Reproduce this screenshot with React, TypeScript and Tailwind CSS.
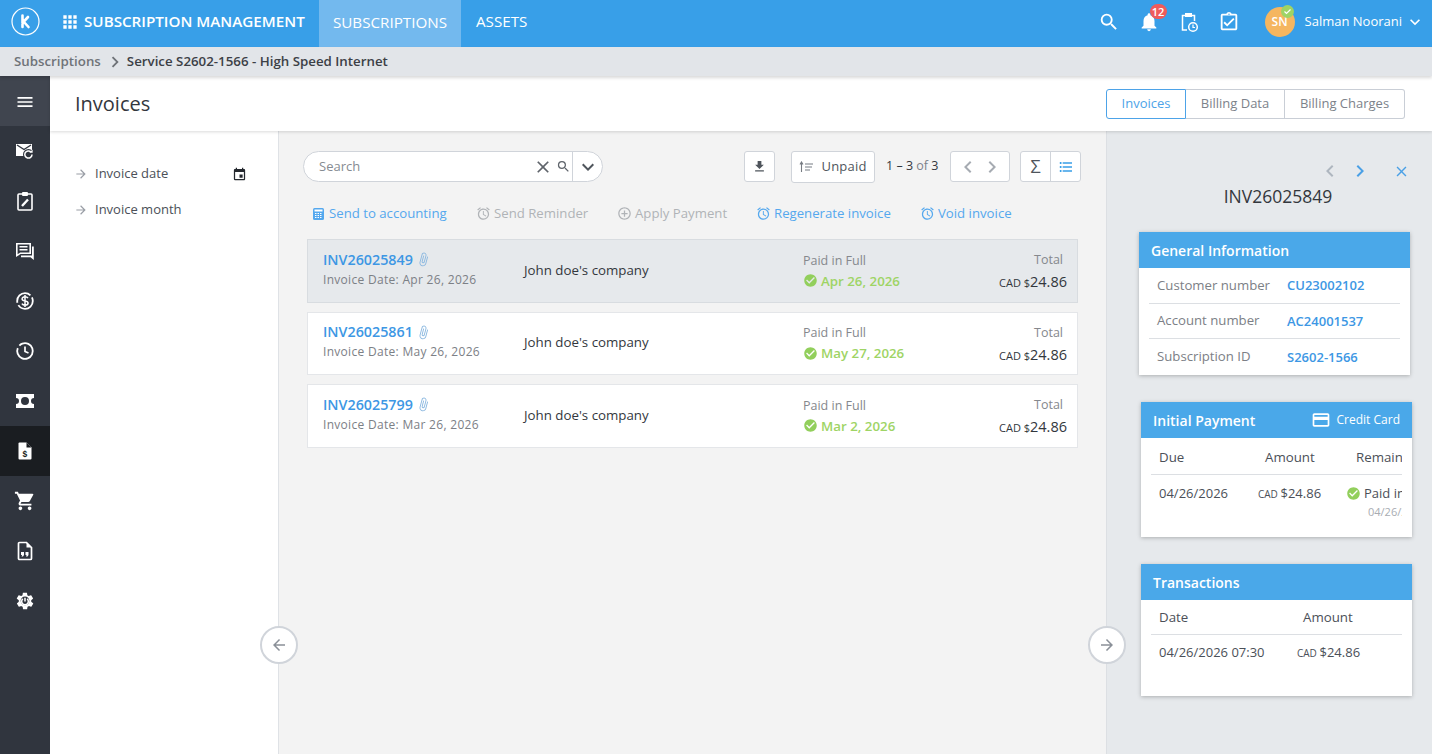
import {
  MdApps,
  MdArrowBack,
  MdArrowForward,
  MdCheckCircle,
  MdChevronLeft,
  MdChevronRight,
  MdClose,
  MdCreditCard,
  MdEvent,
  MdFileDownload,
  MdKeyboardArrowDown,
  MdMenu,
  MdNotifications,
  MdOutlineAccessAlarm,
  MdOutlineAddCircleOutline,
  MdOutlineAssignmentTurnedIn,
  MdOutlineAttachFile,
  MdOutlineFormatListBulleted,
  MdSearch,
  MdShoppingCart,
} from "react-icons/md";

const invoices = [
  { id: "INV26025849", date: "Apr 26, 2026", paid: "Apr 26, 2026", selected: true },
  { id: "INV26025861", date: "May 26, 2026", paid: "May 27, 2026", selected: false },
  { id: "INV26025799", date: "Mar 26, 2026", paid: "Mar 2, 2026", selected: false },
];

function Logo() {
  return (
    <svg width="29" height="29" viewBox="0 0 29 29" fill="none" stroke="white">
      <circle cx="14.5" cy="14.5" r="13.5" strokeWidth="1.2" />
      <path d="M11.5 8.5V20M11.5 16L17 10M12.5 14.5L17.5 20" strokeWidth="2.6" strokeLinecap="round" />
    </svg>
  );
}

function SideIcon({ children, active }: { children: React.ReactNode; active?: boolean }) {
  return (
    <div className={active ? "h-[50px] flex items-center justify-center bg-[#1a1d21]" : "h-[50px] flex items-center justify-center"}>
      {children}
    </div>
  );
}

function Sidebar() {
  return (
    <aside className="w-[50px] shrink-0 bg-[#30353e] text-white">
      <div className="h-[50px] pt-[2px] flex items-center justify-center bg-[#40454f]">
        <MdMenu size={20} />
      </div>
      <SideIcon>
        <svg width="20" height="20" viewBox="0 0 20 20" fill="none">
          <path d="M1 3h16v9.5H9V15H1z" fill="white" />
          <path d="M2 4l7 4.5L16 4" stroke="#30353e" strokeWidth="1.4" />
          <circle cx="13.5" cy="13.5" r="5.5" fill="#30353e" />
          <path d="M17 13.5a3.6 3.6 0 1 1-1.1-2.6" stroke="white" strokeWidth="1.5" />
          <path d="M17.6 8.6v3.2h-3.2z" fill="white" />
        </svg>
      </SideIcon>
      <SideIcon>
        <svg width="20" height="20" viewBox="0 0 20 20" fill="none">
          <rect x="3" y="3" width="14" height="16" rx="1" stroke="white" strokeWidth="1.6" />
          <rect x="7" y="1" width="6" height="4" rx="1" fill="white" />
          <path d="M7 15l6-6.5" stroke="white" strokeWidth="2.4" />
        </svg>
      </SideIcon>
      <SideIcon>
        <svg width="20" height="20" viewBox="0 0 20 20" fill="none">
          <path d="M1.8 2.800h13.400v9.400H5.500l-3.700 2.400z" stroke="white" strokeWidth="1.600" />
          <path d="M4.500 5.800h8M4.500 8.800h8" stroke="white" strokeWidth="1.600" />
          <path d="M17 5.500h1.800V19l-3.300-2.800H6v-1.800h11z" fill="white" />
        </svg>
      </SideIcon>
      <SideIcon>
        <svg width="20" height="20" viewBox="0 0 20 20" fill="none" stroke="white">
          <circle cx="10" cy="10" r="7.8" strokeWidth="1.8" strokeDasharray="20 2.5" />
          <path d="M13 7.200c-.6-1-1.700-1.400-3-1.400-1.700 0-2.900.9-2.900 2.100 0 2.900 6 1.300 6 4.200 0 1.200-1.300 2.100-3.100 2.100-1.400 0-2.500-.5-3.100-1.500M10 4v12" strokeWidth="1.5" />
        </svg>
      </SideIcon>
      <SideIcon>
        <svg width="20" height="20" viewBox="0 0 20 20" fill="none" stroke="white">
          <circle cx="10" cy="10" r="7.8" strokeWidth="1.8" strokeDasharray="30 3" transform="rotate(-20 10 10)" />
          <path d="M10 5.500V10.500L13.500 12" strokeWidth="1.7" />
        </svg>
      </SideIcon>
      <SideIcon>
        <svg width="20" height="14" viewBox="0 0 20 14">
          <path d="M1 0h18v4a3 3 0 0 0 0 6v4H1v-4a3 3 0 0 0 0-6z" fill="white" />
          <circle cx="10" cy="7" r="4" fill="#30353e" />
        </svg>
      </SideIcon>
      <SideIcon active>
        <svg width="18" height="20" viewBox="0 0 18 20">
          <path d="M3.500 1.500h7l5 5v11a1 1 0 0 1-1 1h-11a1 1 0 0 1-1-1v-15a1 1 0 0 1 1-1z" fill="white" />
          <path d="M10.500 1.500l5 5h-5z" fill="#1a1d21" />
          <text x="8.800" y="16" fontSize="8.500" fontWeight="700" textAnchor="middle" fill="#1a1d21" fontFamily="Liberation Sans, sans-serif">$</text>
        </svg>
      </SideIcon>
      <SideIcon>
        <MdShoppingCart size={22} />
      </SideIcon>
      <SideIcon>
        <svg width="18" height="20" viewBox="0 0 18 20" fill="none">
          <path d="M3.500 1.500h7l5 5v11a1 1 0 0 1-1 1h-11a1 1 0 0 1-1-1v-15a1 1 0 0 1 1-1z" fill="#30353e" stroke="white" strokeWidth="1.700" />
          <path d="M10.500 1.500l5 5h-5z" fill="white" />
          <path d="M5 11h3v3l-1 1.500H5.500l.6-1.500H5zM9.500 11h3v3l-1 1.500H10l.6-1.500h-1.100z" fill="white" />
        </svg>
      </SideIcon>
      <SideIcon>
        <svg width="20" height="20" viewBox="0 0 24 24" fill="white">
          <path fillRule="evenodd" d="M19.400 13c.1-.3.100-.7.100-1s0-.7-.1-1l2.100-1.600c.2-.2.200-.4.100-.6l-2-3.500c-.1-.2-.4-.3-.6-.2l-2.500 1c-.5-.4-1.100-.7-1.700-1l-.4-2.600c0-.2-.2-.4-.5-.4h-4c-.3 0-.5.200-.5.400l-.4 2.600c-.6.300-1.200.6-1.700 1l-2.500-1c-.2-.1-.5 0-.6.200l-2 3.500c-.1.200-.1.400.1.600L4.600 11c0 .3-.1.700-.1 1s0 .7.100 1l-2.100 1.600c-.2.200-.2.400-.1.600l2 3.500c.1.200.4.300.6.200l2.500-1c.5.400 1.100.7 1.700 1l.4 2.600c0 .2.200.4.500.4h4c.3 0 .5-.2.500-.4l.4-2.600c.6-.3 1.200-.6 1.700-1l2.500 1c.2.100.5 0 .6-.2l2-3.500c.1-.2.100-.4-.1-.6zM12 17a5.200 5.200 0 1 1 0-10.400A5.200 5.200 0 0 1 12 17z" />
          <path d="M9.400 9.500a4 4 0 1 0 5.200 0M12 8v4.500" fill="none" stroke="white" strokeWidth="1.800" />
        </svg>
      </SideIcon>
    </aside>
  );
}

function TopBar() {
  return (
    <header className="h-[47px] pb-[4px] bg-[#389fe8] text-white flex items-center">
      <div className="w-[50px] flex justify-center">
        <Logo />
      </div>
      <MdApps size={20} className="ml-[10px]" />
      <div className="ml-[4px] w-[235px] text-[15.2px] font-semibold">SUBSCRIPTION MANAGEMENT</div>
      <div className="self-start h-[47px] pb-[3px] w-[142px] bg-[#73b9ee] flex items-center justify-center text-[15.2px]">SUBSCRIPTIONS</div>
      <div className="ml-[15px] text-[15.2px]">ASSETS</div>
      <div className="ml-auto flex items-center">
        <MdSearch size={22} />
        <div className="relative ml-[18px]">
          <MdNotifications size={22} />
          <span className="absolute -top-[7px] left-[12px] w-[17px] h-[15px] rounded-full bg-[#ef5b5b] text-[11px] leading-[15px] font-semibold text-center">12</span>
        </div>
        <svg className="ml-[18px]" width="22" height="22" viewBox="0 0 22 22" fill="none" stroke="white">
          <path d="M9 19H4.500V4.500h12V10" strokeWidth="1.500" />
          <rect x="7.500" y="2.500" width="6" height="3" fill="white" />
          <circle cx="15" cy="16" r="4.300" strokeWidth="1.500" />
          <path d="M15 13.500V16.500H17" strokeWidth="1.200" />
        </svg>
        <MdOutlineAssignmentTurnedIn size={22} className="ml-[18px]" />
        <div className="relative ml-[25px] w-[30px] h-[30px] rounded-full bg-[#f5b660] flex items-center justify-center text-[12px] font-semibold">
          SN
          <span className="absolute -top-[2px] left-[16px] w-[13px] h-[13px] rounded-full bg-[#9ed465] flex items-center justify-center">
            <svg width="9" height="9" viewBox="0 0 9 9" fill="none" stroke="white" strokeWidth="1.200">
              <path d="M1.500 4.500l2 2 4-4" />
            </svg>
          </span>
        </div>
        <div className="ml-[10px] text-[13px]">Salman Noorani</div>
        <MdKeyboardArrowDown size={20} className="ml-[3px] mr-[7px]" />
      </div>
    </header>
  );
}

function Breadcrumb() {
  return (
    <div className="h-[29px] bg-[#e2e5e9] flex items-center pl-[14px] text-[13.3px] font-semibold shadow-[0_2px_3px_rgba(0,0,0,0.15)] relative z-10">
      <span className="text-[#6f7378]">Subscriptions</span>
      <MdChevronRight size={22} className="text-[#6f7378] ml-[3px] mr-[1px]" />
      <span className="text-[#3c4046]">Service S2602-1566 - High Speed Internet</span>
    </div>
  );
}

function PageHeader() {
  return (
    <div className="h-[55px] bg-white flex items-center pl-[25px] pr-[27px] shadow-[0_1px_3px_rgba(0,0,0,0.15)] relative z-[5]">
      <h1 className="text-[20px] font-normal text-[#33373d]">Invoices</h1>
      <div className="ml-auto flex h-[30px] text-[13px] text-[#7c828a]">
        <div className="w-[80px] pt-[1px] flex items-center justify-center border border-[#4da3e8] rounded-l-[3px] text-[#4da3e8]">Invoices</div>
        <div className="w-[99px] pt-[1px] flex items-center justify-center border-y border-r border-[#c9ced6]">Billing Data</div>
        <div className="w-[120px] pt-[1px] flex items-center justify-center border-y border-r border-[#c9ced6] rounded-r-[3px]">Billing Charges</div>
      </div>
    </div>
  );
}

function Filters() {
  return (
    <div className="w-[229px] shrink-0 bg-white border-r border-[#dfe2e6] pl-[24px] pt-[25px] pr-[31px] text-[13px] text-[#4b5058]">
      <div className="h-[36px] flex items-center">
        <MdArrowForward size={14} className="text-[#9a9ea6] mr-[7px]" />
        <span>Invoice date</span>
        <MdEvent size={15} className="ml-auto text-[#24282e]" />
      </div>
      <div className="h-[36px] flex items-center">
        <MdArrowForward size={14} className="text-[#9a9ea6] mr-[7px]" />
        <span>Invoice month</span>
      </div>
    </div>
  );
}

function ToolButton({ children, className }: { children: React.ReactNode; className: string }) {
  return (
    <div className={`h-[31px] bg-white border border-[#d0d4da] rounded-[3px] flex items-center justify-center ${className}`}>
      {children}
    </div>
  );
}

function Toolbar() {
  return (
    <div className="flex items-start pl-[24px] pr-[25px] pt-[20px]">
      <div className="w-[300px] h-[31px] bg-white border border-[#d0d4da] rounded-full flex items-center pl-[15px] text-[13px] text-[#868b92]">
        <span>Search</span>
        <MdClose size={20} className="ml-auto text-[#5f646b]" />
        <MdSearch size={15} className="ml-[3px] text-[#5f646b]" />
        <div className="ml-[1px] h-full w-[30px] border-l border-[#d0d4da] flex items-center justify-center">
          <MdKeyboardArrowDown size={24} className="text-[#4f555c]" />
        </div>
      </div>
      <ToolButton className="ml-auto w-[31px]">
        <MdFileDownload size={15} className="text-[#4f555c]" />
      </ToolButton>
      <ToolButton className="ml-[16px] w-[84px] h-[32px] text-[13px] font-medium tracking-[0.2px] text-[#4f555c]">
        <svg width="14" height="12" viewBox="0 0 14 12" fill="none" stroke="#777c83" className="mr-[8px]">
          <path d="M2.500 11V2M1 3.500L2.500 1 4 3.500M6 3h8M6 6h7M6 9h5" strokeWidth="1.100" />
        </svg>
        Unpaid
      </ToolButton>
      <div className="ml-[11px] w-[64px] h-[31px] text-[12.500px] leading-[29px] text-[#33373d]">
        1 – 3 <span className="text-[#7c828a]">of</span> 3
      </div>
      <ToolButton className="w-[60px] justify-between">
        <MdChevronLeft size={24} className="text-[#a6abb2]" />
        <MdChevronRight size={24} className="text-[#a6abb2]" />
      </ToolButton>
      <div className="ml-[10px] h-[31px] w-[61px] bg-white border border-[#d0d4da] rounded-[3px] flex text-[18px] text-[#4f555c]">
        <div className="w-[30px] border-r border-[#d0d4da] flex items-center justify-center">Σ</div>
        <div className="flex-1 flex items-center justify-center">
          <MdOutlineFormatListBulleted size={16} className="text-[#389fe8]" />
        </div>
      </div>
    </div>
  );
}

function ActionLink({ icon, label, disabled, className }: { icon: React.ReactNode; label: string; disabled?: boolean; className: string }) {
  return (
    <div className={`flex items-center gap-[3px] ${disabled ? "text-[#b0b3b7]" : "text-[#55a8ee]"} ${className}`}>
      {icon}
      <span>{label}</span>
    </div>
  );
}

function Actions() {
  return (
    <div className="flex items-center h-[20px] mt-[21px] pl-[33px] text-[13.2px]">
      <ActionLink
        className="w-[164px]"
        label="Send to accounting"
        icon={
          <svg width="14" height="14" viewBox="0 0 14 14">
            <rect x="1" y="1" width="11" height="12" rx="1.500" fill="#55a8ee" />
            <rect x="2.500" y="2.500" width="8" height="2" fill="white" />
            <path d="M3 6.500h7M3 8.500h7M3 10.500h7" stroke="white" strokeWidth="1" strokeDasharray="1.500 1" />
          </svg>
        }
      />
      <ActionLink disabled className="w-[141px]" label="Send Reminder" icon={<MdOutlineAccessAlarm size={15} />} />
      <ActionLink disabled className="w-[139px]" label="Apply Payment" icon={<MdOutlineAddCircleOutline size={15} />} />
      <ActionLink className="w-[164px]" label="Regenerate invoice" icon={<MdOutlineAccessAlarm size={15} />} />
      <ActionLink className="" label="Void invoice" icon={<MdOutlineAccessAlarm size={15} />} />
    </div>
  );
}

function InvoiceRow({ id, date, paid, selected }: { id: string; date: string; paid: string; selected: boolean }) {
  return (
    <div className={`h-[63.500px] flex items-center border pl-[15px] pr-[10px] ${selected ? "bg-[#e6e9ec] border-[#d8dce0]" : "bg-white border-[#e4e6e9]"}`}>
      <div className="w-[201px] pb-[2px]">
        <div className="flex items-center text-[14.3px] leading-[20px] font-semibold text-[#3d97e4]">
          {id}
          <MdOutlineAttachFile size={15} className="ml-[3px] rotate-[15deg] text-[#8db9e0]" />
        </div>
        <div className="text-[12px] leading-[20px] text-[#7c8086] tracking-[0.3px]">Invoice Date: {date}</div>
      </div>
      <div className="w-[279px] text-[13.3px] text-[#33373d]">John doe's company</div>
      <div className="flex-1 pt-[2px]">
        <div className="text-[12.500px] leading-[18px] text-[#85888d]">Paid in Full</div>
        <div className="flex items-center text-[13.3px] leading-[22px] font-semibold text-[#9ed465]">
          <MdCheckCircle size={15} className="mr-[3px] text-[#92cf5c]" />
          {paid}
        </div>
      </div>
      <div className="text-right pt-[4px]">
        <div className="text-[12.500px] leading-[18px] pr-[4px] text-[#85888d]">Total</div>
        <div className="mt-[2px] text-[14.500px] leading-[22px] font-medium text-[#33373d]">
          <span className="text-[11px]">CAD $</span>24.86
        </div>
      </div>
    </div>
  );
}

function Card({ title, right, children, className }: { title: string; right?: React.ReactNode; children: React.ReactNode; className: string }) {
  return (
    <section className={`w-[271px] bg-white shadow-[0_1px_4px_rgba(0,0,0,0.25)] overflow-hidden ${className}`}>
      <div className="h-[36px] bg-[#4aa8e9] text-white flex items-center px-[12px]">
        <span className="text-[14px] font-semibold">{title}</span>
        {right}
      </div>
      {children}
    </section>
  );
}

function InfoRow({ label, value, last }: { label: string; value: string; last?: boolean }) {
  return (
    <div className={`h-[35.500px] pt-[1px] flex items-center pl-[8px] ${last ? "" : "border-b border-[#dcdfe3]"}`}>
      <span className="w-[130px] text-[13.2px] text-[#7c8086]">{label}</span>
      <span className="text-[13px] font-semibold text-[#3d97e4]">{value}</span>
    </div>
  );
}

function Details() {
  return (
    <div className="w-[326px] shrink-0 bg-[#e6e9ec] border-l border-[#dcdfe3] overflow-hidden">
      <div className="flex items-center justify-end h-[22px] mt-[29px] pr-[22px]">
        <MdChevronLeft size={24} className="text-[#aeb6bf]" />
        <MdChevronRight size={24} className="ml-[6px] text-[#4aa0e6]" />
        <MdClose size={17} className="ml-[21px] text-[#4aa0e6]" />
      </div>
      <div className="text-center text-[17.500px] leading-[24px] font-medium text-[#33373d] pl-[17px] mt-[2px] mb-[24px] h-[24px]">INV26025849</div>
      <Card title="General Information" className="ml-[32px] h-[143px]">
        <div className="px-[10px]">
          <InfoRow label="Customer number" value="CU23002102" />
          <InfoRow label="Account number" value="AC24001537" />
          <InfoRow label="Subscription ID" value="S2602-1566" last />
        </div>
      </Card>
      <Card
        title="Initial Payment"
        className="ml-[34px] mt-[27px] h-[135px]"
        right={
          <div className="ml-auto flex items-center text-[12px]">
            <MdCreditCard size={20} className="mr-[6px]" />
            Credit Card
          </div>
        }
      >
        <div className="mx-[10px] overflow-hidden">
          <div className="h-[37px] pt-[3px] flex items-center border-b border-[#dcdfe3] text-[13.3px] text-[#4b5058] whitespace-nowrap pl-[8px]">
            <span className="w-[106px] shrink-0">Due</span>
            <span className="w-[91px] shrink-0">Amount</span>
            <span className="shrink-0">Remaining</span>
          </div>
          <div className="flex items-start pt-[9px] pl-[8px] text-[13px] text-[#4b5058] whitespace-nowrap">
            <span className="w-[99px] shrink-0">04/26/2026</span>
            <span className="w-[88px] shrink-0">
              <span className="text-[10px]">CAD </span>$24.86
            </span>
            <span className="shrink-0">
              <span className="flex items-center">
                <MdCheckCircle size={15} className="mr-[3px] text-[#92cf5c]" />
                Paid in Full
              </span>
              <span className="block pl-[22px] text-[11px] text-[#a8acb2]">04/26/2026</span>
            </span>
          </div>
        </div>
      </Card>
      <Card title="Transactions" className="ml-[34px] mt-[27px] h-[132px]">
        <div className="mx-[10px] overflow-hidden">
          <div className="h-[35px] pt-[2px] flex items-center border-b border-[#dcdfe3] text-[13.3px] text-[#4b5058] whitespace-nowrap pl-[8px]">
            <span className="w-[144px] shrink-0">Date</span>
            <span className="w-[100px] shrink-0">Amount</span>
            <span className="shrink-0">Type</span>
          </div>
          <div className="flex items-start pt-[8px] pl-[8px] text-[13px] text-[#4b5058] whitespace-nowrap">
            <span className="w-[138px] shrink-0">04/26/2026 07:30</span>
            <span className="shrink-0">
              <span className="text-[10px]">CAD </span>$24.86
            </span>
          </div>
        </div>
      </Card>
    </div>
  );
}

function CircleArrow({ children, className }: { children: React.ReactNode; className: string }) {
  return (
    <div className={`absolute w-[38px] h-[38px] rounded-full bg-white border-2 border-[#d0d4da] flex items-center justify-center text-[#8a9098] ${className}`}>
      {children}
    </div>
  );
}

export default function App() {
  return (
    <div className="h-[754px] w-[1432px] overflow-hidden flex flex-col relative font-['Open_Sans',sans-serif]">
      <TopBar />
      <Breadcrumb />
      <div className="flex flex-1 min-h-0">
        <Sidebar />
        <div className="flex-1 flex flex-col min-w-0">
          <PageHeader />
          <div className="flex flex-1 min-h-0">
            <Filters />
            <main className="flex-1 bg-[#f3f3f3] min-w-0">
              <Toolbar />
              <Actions />
              <div className="mt-[15px] ml-[28px] mr-[28px] flex flex-col gap-[9px]">
                {invoices.map(invoice => (
                  <InvoiceRow key={invoice.id} {...invoice} />
                ))}
              </div>
            </main>
            <Details />
          </div>
        </div>
      </div>
      <CircleArrow className="left-[260px] top-[626px]">
        <MdArrowBack size={18} />
      </CircleArrow>
      <CircleArrow className="left-[1088px] top-[626px]">
        <MdArrowForward size={18} />
      </CircleArrow>
    </div>
  );
}
